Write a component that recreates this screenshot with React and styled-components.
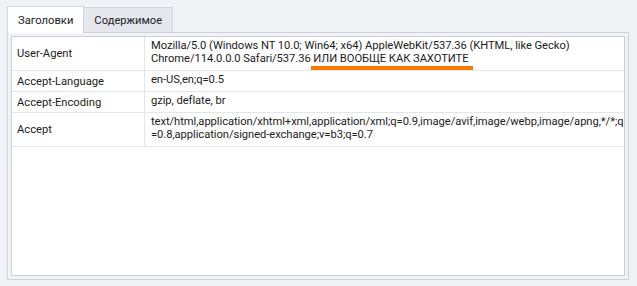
import React from 'react'
import styled, { createGlobalStyle } from 'styled-components'

const GlobalStyle = createGlobalStyle`
    html, body {
        margin: 0;
        padding: 0;
        background: #f1f2f6;
    }
    body {
        font-family: Roboto, "Noto Sans", sans-serif;
        font-size: 11.2px;
        color: #1c1c1c;
    }
`

const Page = styled.div`
    width: 637px;
    height: 286px;
    padding: 6px 8px 6px 7px;
    box-sizing: border-box;
    display: flex;
    flex-direction: column;
`

const TabBar = styled.div`
    display: flex;
    align-items: flex-end;
    height: 26px;
    position: relative;
    z-index: 1;
`

const Tab = styled.div`
    box-sizing: border-box;
    height: ${(props) => props.active ? "27px" : "25px"};
    margin-bottom: ${(props) => props.active ? "-1px" : "0"};
    padding: 0 10px;
    display: flex;
    align-items: center;
    background: ${(props) => props.active ? "#ffffff" : "#e5e7ec"};
    border: 1px solid #d3d6dc;
    border-bottom: none;
    border-left: ${(props) => props.first ? "1px solid #d3d6dc" : "none"};
    color: #222;
`

const Panel = styled.div`
    flex: 1;
    min-width: 0;
    border: 1px solid #cfd2d8;
    padding: 3px;
    background: #f1f2f6;
    display: flex;
`

const Inner = styled.div`
    flex: 1;
    min-width: 0;
    border: 1px solid #cdd0d6;
    background: #ffffff;
    overflow: hidden;
`

const Table = styled.div`
    display: grid;
    grid-template-columns: 133px minmax(0, 1fr);
`

const Cell = styled.div`
    border-bottom: 1px solid #e4e5e8;
    border-right: ${(props) => props.label ? "1px solid #e4e5e8" : "none"};
    padding: ${(props) => props.label ? "0 5px" : "2px 6px 5px"};
    display: flex;
    align-items: ${(props) => props.label ? "center" : "flex-start"};
    line-height: 13px;
    letter-spacing: ${(props) => props.label ? "0" : "-0.06px"};
    white-space: nowrap;
`

const Mark = styled.span`
    position: relative;
`

const Underline = styled.span`
    position: absolute;
    left: -2px;
    right: -5px;
    bottom: -5px;
    height: 4px;
    background: #ff7800;
`

const rows = [
    {
        name: "User-Agent",
        value: (
            <span>
                Mozilla/5.0 (Windows NT 10.0; Win64; x64) AppleWebKit/537.36 (KHTML, like Gecko)<br />
                Chrome/114.0.0.0 Safari/537.36 <Mark>ИЛИ ВООБЩЕ КАК ЗАХОТИТЕ<Underline /></Mark>
            </span>
        ),
    },
    { name: "Accept-Language", value: "en-US,en;q=0.5" },
    { name: "Accept-Encoding", value: "gzip, deflate, br" },
    {
        name: "Accept",
        value: (
            <span>
                text/html,application/xhtml+xml,application/xml;q=0.9,image/avif,image/webp,image/apng,*/*;q<br />
                =0.8,application/signed-exchange;v=b3;q=0.7
            </span>
        ),
    },
]

const App = () => {
    return (
        <Page>
            <GlobalStyle />
            <TabBar>
                <Tab active first>Заголовки</Tab>
                <Tab>Содержимое</Tab>
            </TabBar>
            <Panel>
                <Inner>
                    <Table>
                        {rows.map((row) => (
                            <React.Fragment key={row.name}>
                                <Cell label>{row.name}</Cell>
                                <Cell>{row.value}</Cell>
                            </React.Fragment>
                        ))}
                    </Table>
                </Inner>
            </Panel>
        </Page>
    )
}

export default App
